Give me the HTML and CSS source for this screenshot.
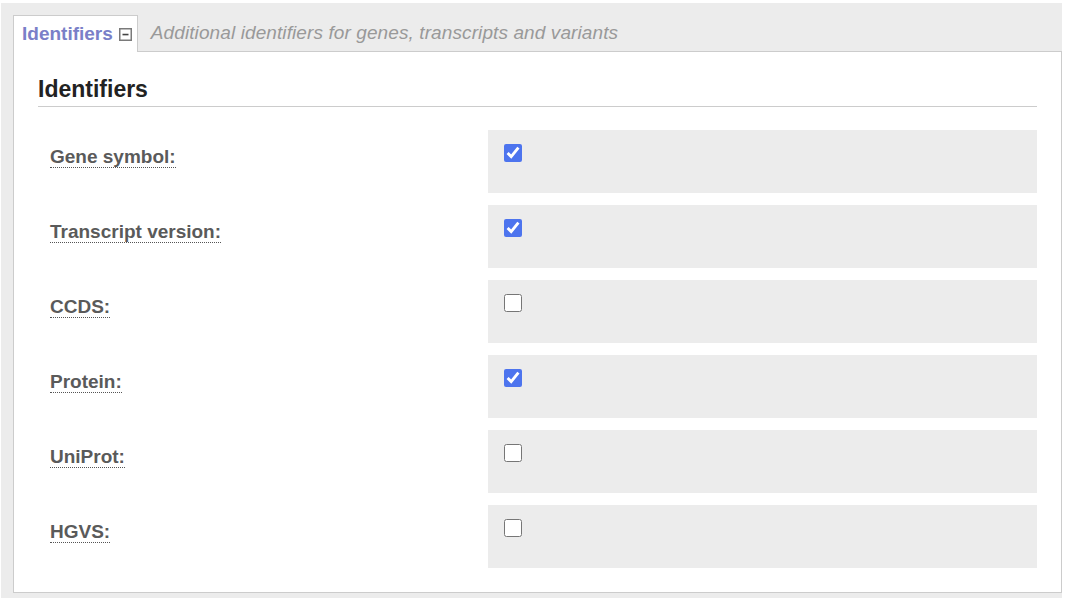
FILE: index.html
```html
<!DOCTYPE html>
<html>
<head>
<meta charset="utf-8">
<link rel="stylesheet" href="styles.css">
</head>
<body>
<div class="wrap">
  <div class="tabs">
    <div class="tab">
      <span class="tab-title">Identifiers</span>
      <svg class="toggle" width="13" height="13" viewBox="0 0 13 13"><rect x="0.75" y="0.75" width="11.5" height="11.5" fill="#fff" stroke="#7a7a7a" stroke-width="1.5"/><rect x="3.5" y="5.75" width="6" height="1.6" fill="#444"/></svg>
    </div>
    <div class="tab-desc">Additional identifiers for genes, transcripts and variants</div>
  </div>
  <div class="panel">
    <h2 class="heading">Identifiers</h2>
    <div class="form">
      <div class="label"><span class="abbr">Gene symbol:</span></div>
      <div class="value"><input type="checkbox" checked></div>
      <div class="label"><span class="abbr">Transcript version:</span></div>
      <div class="value"><input type="checkbox" checked></div>
      <div class="label"><span class="abbr">CCDS:</span></div>
      <div class="value"><input type="checkbox"></div>
      <div class="label"><span class="abbr">Protein:</span></div>
      <div class="value"><input type="checkbox" checked></div>
      <div class="label"><span class="abbr">UniProt:</span></div>
      <div class="value"><input type="checkbox"></div>
      <div class="label"><span class="abbr">HGVS:</span></div>
      <div class="value"><input type="checkbox"></div>
    </div>
  </div>
</div>
</body>
</html>
```

FILE: styles.css
```css
html, body {
  margin: 0;
  padding: 0;
  background: #fff;
  font-family: "Liberation Sans", Arial, sans-serif;
}
.wrap {
  margin: 3px 6px 0 1px;
  padding: 12px 0 5px 12px;
  background: #ececec;
  min-height: 578px;
}
.tabs {
  display: flex;
  align-items: stretch;
  height: 36px;
}
.tab {
  display: flex;
  align-items: center;
  flex-shrink: 0;
  background: #fff;
  border: 1px solid #ccc;
  border-bottom: none;
  padding: 0 5px 0 8px;
  margin-bottom: -1px;
  position: relative;
  z-index: 1;
  height: 37px;
  box-sizing: border-box;
}
.tab-title {
  font-size: 19px;
  font-weight: bold;
  color: #7a7fc8;
}
.toggle {
  flex-shrink: 0;
  margin-left: 6px;
  margin-top: 1px;
}
.tab-desc {
  display: flex;
  align-items: center;
  margin-left: 13px;
  font-size: 19px;
  font-style: italic;
  color: #999;
  letter-spacing: 0.1px;
}
.panel {
  background: #fff;
  border: 1px solid #ccc;
  padding: 24px;
}
.heading {
  margin: 0;
  font-size: 23px;
  font-weight: bold;
  color: #222;
  padding-bottom: 3px;
  border-bottom: 1px solid #ccc;
}
.form {
  margin-top: 23px;
  display: grid;
  grid-template-columns: 450px 549px;
  grid-auto-rows: 63px;
  row-gap: 12px;
}
.label {
  padding: 16px 0 0 12px;
  font-size: 19px;
  font-weight: bold;
  color: #5a5a5a;
}
.abbr {
  border-bottom: 1px dotted #555;
}
.value {
  background: #ececec;
  padding: 14px 16px;
}
.value input {
  margin: 0;
  width: 18px;
  height: 18px;
  accent-color: #4d74ee;
  display: block;
}
```
